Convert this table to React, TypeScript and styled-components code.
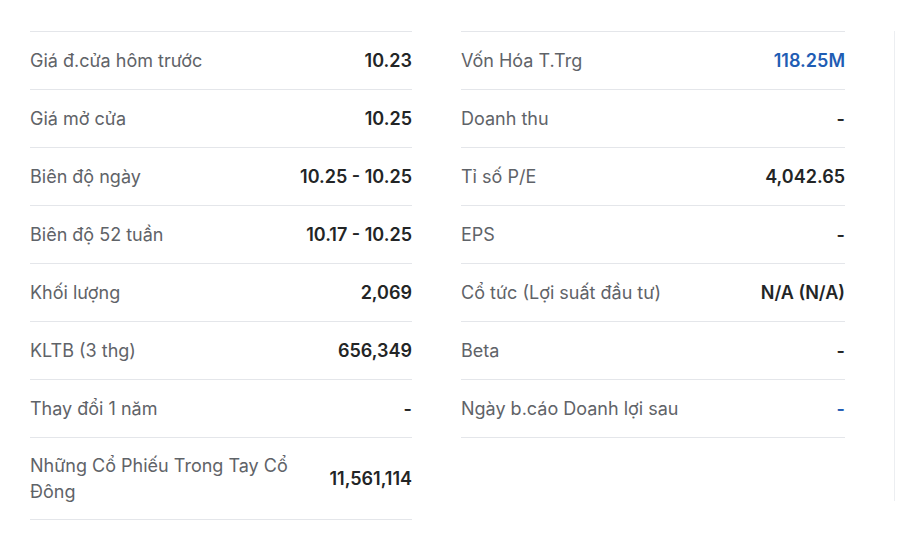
import styled, { createGlobalStyle } from "styled-components";

const GlobalStyle = createGlobalStyle`
  body {
    margin: 0;
    background: #ffffff;
    font-family: Inter, "Noto Sans", sans-serif;
  }
`;

interface Stat {
  label: string;
  value: string;
  accent?: boolean;
}

const leftStats: Stat[] = [
  { label: "Giá đ.cửa hôm trước", value: "10.23" },
  { label: "Giá mở cửa", value: "10.25" },
  { label: "Biên độ ngày", value: "10.25 - 10.25" },
  { label: "Biên độ 52 tuần", value: "10.17 - 10.25" },
  { label: "Khối lượng", value: "2,069" },
  { label: "KLTB (3 thg)", value: "656,349" },
  { label: "Thay đổi 1 năm", value: "-" },
  { label: "Những Cổ Phiếu Trong Tay Cổ Đông", value: "11,561,114" },
];

const rightStats: Stat[] = [
  { label: "Vốn Hóa T.Trg", value: "118.25M", accent: true },
  { label: "Doanh thu", value: "-" },
  { label: "Tỉ số P/E", value: "4,042.65" },
  { label: "EPS", value: "-" },
  { label: "Cổ tức (Lợi suất đầu tư)", value: "N/A (N/A)" },
  { label: "Beta", value: "-" },
  { label: "Ngày b.cáo Doanh lợi sau", value: "-", accent: true },
];

export default function App() {
  return (
    <>
      <GlobalStyle />
      <Page>
        <Grid>
          <Column>
            {leftStats.map((s) => (
              <Row key={s.label}>
                <Label>{s.label}</Label>
                <Value $accent={s.accent}>{s.value}</Value>
              </Row>
            ))}
          </Column>
          <Column>
            {rightStats.map((s) => (
              <Row key={s.label}>
                <Label>{s.label}</Label>
                <Value $accent={s.accent}>{s.value}</Value>
              </Row>
            ))}
          </Column>
        </Grid>
        <Divider />
      </Page>
    </>
  );
}

const Page = styled.div`
  display: flex;
  align-items: flex-start;
  padding: 31px 0 0 30px;
  height: 533px;
  box-sizing: border-box;
`;

const Grid = styled.div`
  display: grid;
  grid-template-columns: 382px 384px;
  column-gap: 49px;
  align-items: start;
`;

const Column = styled.div`
  display: flex;
  flex-direction: column;
  border-bottom: 1px solid #e4e6ea;
`;

const Row = styled.div`
  display: flex;
  align-items: center;
  justify-content: space-between;
  gap: 24px;
  min-height: 58px;
  padding: 15px 0 14px;
  box-sizing: border-box;
  border-top: 1px solid #e4e6ea;
  font-size: 18px;
  line-height: 26px;
`;

const Label = styled.span`
  color: #5f6368;
  max-width: 270px;
`;

const Value = styled.span<{ $accent?: boolean }>`
  color: ${(p) => (p.$accent ? "#1f5db4" : "#232526")};
  font-weight: 600;
  white-space: nowrap;
`;

const Divider = styled.div`
  width: 1px;
  height: 470px;
  margin-left: 49px;
  background: #eceef1;
`;
